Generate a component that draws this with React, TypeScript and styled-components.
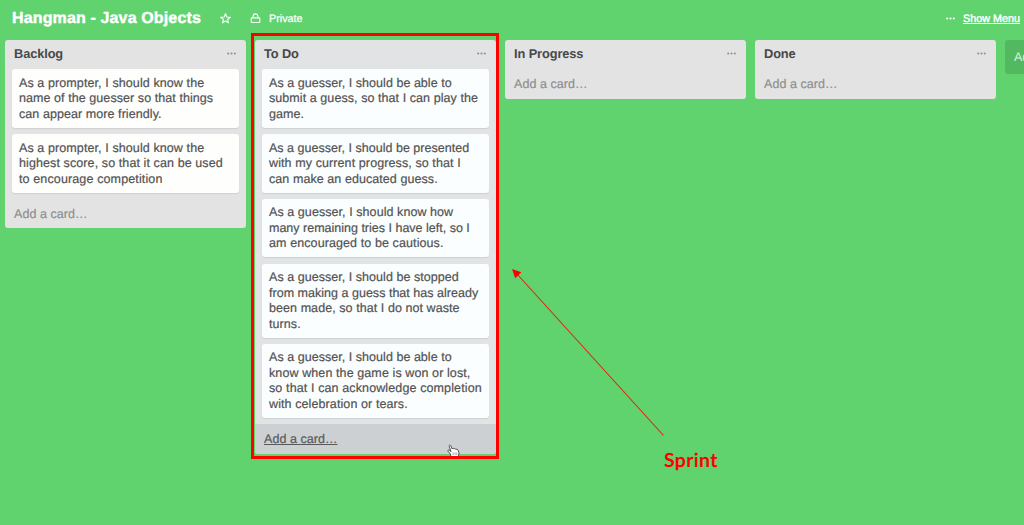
import React from "react";
import styled, { createGlobalStyle } from "styled-components";

const GlobalStyle = createGlobalStyle`
  * { box-sizing: border-box; }
  html, body { margin: 0; padding: 0; background: #60d36f; overflow: hidden; }
`;

const Board = styled.div`
  position: relative;
  width: 1024px;
  height: 525px;
  overflow: hidden;
  background: #60d36f;
  font-family: "Liberation Sans", Arial, sans-serif;
  font-size: 12.5px;
  color: #525252;
  text-rendering: geometricPrecision;
`;

const TopBar = styled.header`
  display: flex;
  align-items: center;
  height: 39.5px;
  padding: 0 4px 2px 12px;
  color: #fff;
  white-space: nowrap;
`;

const BoardTitle = styled.h1`
  width: 208px;
  margin: 0;
  font-size: 16px;
  line-height: 20px;
  letter-spacing: 0.14px;
  -webkit-text-stroke: 0.4px #fff;
`;

const Visibility = styled.span`
  display: flex;
  align-items: center;
  gap: 8px;
  margin-left: 19px;
  font-size: 10.8px;
  -webkit-text-stroke: 0.25px #fff;
`;

const MenuLink = styled.div`
  display: flex;
  align-items: center;
  gap: 8px;
  margin-left: auto;
  font-size: 10.8px;
  -webkit-text-stroke: 0.4px #fff;
  span { text-decoration: underline; }
`;

const Lists = styled.main`
  display: flex;
  align-items: flex-start;
  gap: 9px;
  padding-left: 5px;
`;

const ListBox = styled.section<{ $cool?: boolean }>`
  flex: 0 0 241px;
  overflow: hidden;
  border-radius: 3px;
  background: ${(p) => (p.$cool ? "#e1e3e5" : "#e3e3e4")};
`;

const ListHeader = styled.div`
  display: flex;
  align-items: center;
  justify-content: space-between;
  height: 29.7px;
  padding: 0 10px 1px 9px;
  color: #8f8f8f;
`;

const ListTitle = styled.h2`
  margin: 0;
  font-size: 12.8px;
  line-height: 16px;
  letter-spacing: -0.1px;
  color: #484848;
`;

const Card = styled.article<{ $cool?: boolean }>`
  width: 227px;
  margin: 0 0 6.2px 7px;
  padding: 6.6px 0 5.6px 7px;
  border-radius: 3px;
  background: ${(p) => (p.$cool ? "#fbfefe" : "#fefefd")};
  box-shadow: 0 1px 1px #cfd0d1;
  line-height: 15.47px;
  -webkit-text-stroke: 0.2px #525252;
`;

const Line = styled.div<{ $tracking?: number }>`
  white-space: nowrap;
  letter-spacing: ${(p) => p.$tracking ?? 0.07}px;
`;

const AddCard = styled.div<{ $hover?: boolean }>`
  height: 29.6px;
  padding: 0 9px;
  line-height: 30.4px;
  letter-spacing: 0.05px;
  color: ${(p) => (p.$hover ? "#58595b" : "#8e8e8e")};
  background: ${(p) => (p.$hover ? "#cdd0d2" : "transparent")};
  text-decoration: ${(p) => (p.$hover ? "underline" : "none")};
  -webkit-text-stroke: 0.2px currentColor;
`;

const AddList = styled.div`
  flex: 0 0 241px;
  height: 34px;
  padding-left: 9px;
  border-radius: 3px;
  background: #53b961;
  color: #d5f3d9;
  line-height: 34px;
`;

const SprintFrame = styled.div`
  position: absolute;
  left: 251px;
  top: 33px;
  width: 248px;
  height: 426px;
  border: 3px solid #fe0000;
`;

const Arrow = styled.svg`
  position: absolute;
  left: 505px;
  top: 262px;
`;

const SprintLabel = styled.div`
  position: absolute;
  left: 664px;
  top: 449px;
  font: bold 19.5px/24px Lato, sans-serif;
  letter-spacing: 0.3px;
  color: #fe0000;
`;

const Pointer = styled.svg`
  position: absolute;
  left: 447px;
  top: 444px;
`;

const Dots = () => (
  <svg width="9" height="3" viewBox="0 0 9 3" fill="currentColor">
    <circle cx="1.2" cy="1.5" r="1.05" />
    <circle cx="4.5" cy="1.5" r="1.05" />
    <circle cx="7.8" cy="1.5" r="1.05" />
  </svg>
);

const Star = () => (
  <svg width="11" height="11" viewBox="0 0 11 11" fill="none" stroke="#fff" strokeWidth="1.1" strokeLinejoin="round">
    <path d="M5.5 .8 6.8 4 10.3 4.2 7.6 6.4 8.5 9.9 5.5 8 2.5 9.9 3.4 6.4 .7 4.2 4.2 4Z" />
  </svg>
);

const Lock = () => (
  <svg width="11" height="11" viewBox="0 0 11 11" fill="none" stroke="#fff" strokeWidth="1.1">
    <rect x="1.2" y="4.9" width="8.6" height="4.6" rx=".8" />
    <path d="M3.1 4.7V3.4a2.4 2.5 0 0 1 4.8 0v1.3" />
  </svg>
);

type TextLine = [text: string, tracking?: number];
type ListData = { title: string; active?: boolean; cards: TextLine[][] };

const lists: ListData[] = [
  {
    title: "Backlog",
    cards: [
      [["As a prompter, I should know the", 0.1], ["name of the guesser so that things"], ["can appear more friendly."]],
      [["As a prompter, I should know the", 0.1], ["highest score, so that it can be used", 0.1], ["to encourage competition", 0.13]],
    ],
  },
  {
    title: "To Do",
    active: true,
    cards: [
      [["As a guesser, I should be able to", 0.04], ["submit a guess, so that I can play the"], ["game."]],
      [["As a guesser, I should be presented", 0.02], ["with my current progress, so that I", 0.1], ["can make an educated guess."]],
      [["As a guesser, I should know how"], ["many remaining tries I have left, so I", 0], ["am encouraged to be cautious.", 0.1]],
      [["As a guesser, I should be stopped", 0.04], ["from making a guess that has already", 0.02], ["been made, so that I do not waste"], ["turns."]],
      [["As a guesser, I should be able to", 0.04], ["know when the game is won or lost,", 0.1], ["so that I can acknowledge completion", 0.12], ["with celebration or tears.", 0.1]],
    ],
  },
  { title: "In Progress", cards: [] },
  { title: "Done", cards: [] },
];

export default function App() {
  return (
    <Board>
      <GlobalStyle />
      <TopBar>
        <BoardTitle>Hangman - Java Objects</BoardTitle>
        <Star />
        <Visibility>
          <Lock />
          Private
        </Visibility>
        <MenuLink>
          <Dots />
          <span>Show Menu</span>
        </MenuLink>
      </TopBar>
      <Lists>
        {lists.map((list) => (
          <ListBox key={list.title} $cool={list.active}>
            <ListHeader>
              <ListTitle>{list.title}</ListTitle>
              <Dots />
            </ListHeader>
            {list.cards.map((lines, i) => (
              <Card key={i} $cool={list.active}>
                {lines.map(([text, tracking]) => (
                  <Line key={text} $tracking={tracking}>
                    {text}
                  </Line>
                ))}
              </Card>
            ))}
            <AddCard $hover={list.active}>Add a card…</AddCard>
          </ListBox>
        ))}
        <AddList>Add a list…</AddList>
      </Lists>
      <Pointer width="14" height="14" viewBox="0 0 14 14">
        <path
          d="M4.3 13.4 3.2 9.8 1 7.2C.5 6.2 1.5 5.6 2.3 6.2L4 7.5 2.2 2.4C1.8 1.1 3.2.6 3.8 1.8L5.3 5C5.6 4.1 6.7 4.2 7 5 7.5 4.4 8.5 4.6 8.8 5.4 9.6 5 10.6 5.3 11 6.2L12 8.7 11.4 13.4Z"
          fill="#fff"
          stroke="#3c3c3c"
          strokeWidth=".9"
        />
        <path d="M6.2 8.4v2.6M8 8.4v2.6M9.8 8.4v2.6" stroke="#777" strokeWidth=".6" />
      </Pointer>
      <SprintFrame />
      <Arrow width="165" height="180" viewBox="0 0 165 180">
        <path d="M158.5 173.5 12 12" stroke="#e8200c" strokeWidth="1.1" />
        <path d="M7 7 16.3 10.3 10.2 16.3Z" fill="#fe0000" />
      </Arrow>
      <SprintLabel>Sprint</SprintLabel>
    </Board>
  );
}
